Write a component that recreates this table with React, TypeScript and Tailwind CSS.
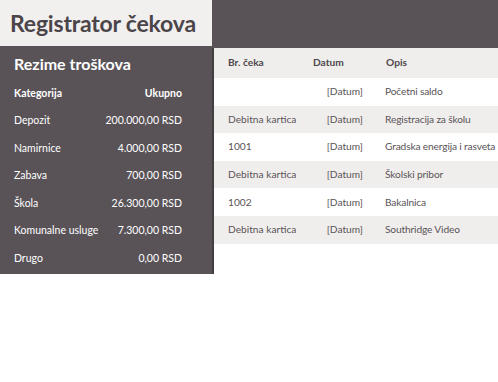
const SUMMARY: ReadonlyArray<{ cat: string; total: string }> = [
  { cat: "Depozit", total: "200.000,00 RSD" },
  { cat: "Namirnice", total: "4.000,00 RSD" },
  { cat: "Zabava", total: "700,00 RSD" },
  { cat: "Škola", total: "26.300,00 RSD" },
  { cat: "Komunalne usluge", total: "7.300,00 RSD" },
  { cat: "Drugo", total: "0,00 RSD" },
];

const ENTRIES: ReadonlyArray<{ nr: string; desc: string }> = [
  { nr: "", desc: "Početni saldo" },
  { nr: "Debitna kartica", desc: "Registracija za školu" },
  { nr: "1001", desc: "Gradska energija i rasveta" },
  { nr: "Debitna kartica", desc: "Školski pribor" },
  { nr: "1002", desc: "Bakalnica" },
  { nr: "Debitna kartica", desc: "Southridge Video" },
];

export default function App() {
  return (
    <div
      className="w-[498px] h-[382px] overflow-hidden bg-white"
      style={{ fontFamily: "Lato, 'Open Sans', sans-serif" }}
    >
      {/* Kopfzeile */}
      <div className="flex h-[48px] bg-[#595358]">
        <div className="w-[212px] h-[46px] shrink-0 bg-[#f2f0ee] flex items-center pl-[10px]">
          <h1 className="text-[23px] font-bold text-[#4b454a] leading-none whitespace-nowrap tracking-[-0.2px]">
            Registrator čekova
          </h1>
        </div>
        <div className="flex-1" />
      </div>

      <div className="flex items-start">
        {/* Rezime */}
        <div className="w-[214px] shrink-0 bg-[#595358] border-r-2 border-[#433e42] text-white text-[10.5px] pb-px">
          <div className="h-[32px] flex items-center pl-[14px]">
            <h2 className="text-[16px] font-bold">Rezime troškova</h2>
          </div>
          <div className="h-[27.5px] flex items-center justify-between pl-[14px] pr-[30px] font-bold">
            <span>Kategorija</span>
            <span>Ukupno</span>
          </div>
          {SUMMARY.map((row) => (
            <div
              key={row.cat}
              className="h-[27.5px] flex items-center justify-between pl-[14px] pr-[30px]"
            >
              <span>{row.cat}</span>
              <span>{row.total}</span>
            </div>
          ))}
        </div>

        {/* Tabelle */}
        <div className="flex-1 min-w-0 text-[10.2px] text-[#5a5458]">
          <div className="h-[30px] bg-[#f0eeec] flex items-center font-bold text-[#4d474b]">
            <span className="w-[99px] shrink-0 pl-[14px]">Br. čeka</span>
            <span className="w-[73px] shrink-0">Datum</span>
            <span>Opis</span>
          </div>
          {ENTRIES.map((e, i) => (
            <div
              key={i}
              className={`h-[27.6px] flex items-center whitespace-nowrap ${
                i % 2 === 1 ? "bg-[#f0eeec]" : "bg-white"
              }`}
            >
              <span className="w-[99px] shrink-0 pl-[14px]">{e.nr}</span>
              <span className="w-[50px] shrink-0 text-right">[Datum]</span>
              <span className="pl-[22px] tracking-[-0.15px]">{e.desc}</span>
            </div>
          ))}
        </div>
      </div>
    </div>
  );
}
